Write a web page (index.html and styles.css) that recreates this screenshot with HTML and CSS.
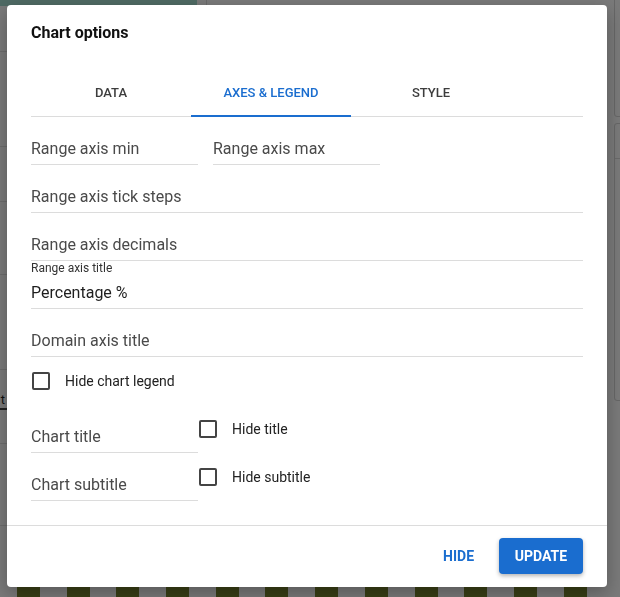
FILE: index.html
```html
<!DOCTYPE html>
<html lang="en">
<head>
<meta charset="utf-8">
<title>Chart options</title>
<link rel="stylesheet" href="styles.css">
</head>
<body>
<div class="page">
  <div class="bg-top-green"></div>
  <div class="bg-top-sep"></div>
  <div class="bg-left-lines">
    <span class="bg-line l1"></span><span class="bg-line l2"></span><span class="bg-line l3"></span>
    <span class="bg-line l4"></span><span class="bg-line l5"></span><span class="bg-line l6"></span>
    <span class="bg-line l7"></span>
  </div>
  <div class="bg-t">t</div>
  <div class="bg-card c1"></div>
  <div class="bg-card c2"></div>
  <div class="bg-bars">
    <span></span><span></span><span></span><span></span><span></span><span></span>
    <span></span><span></span><span></span><span></span><span></span><span></span>
  </div>
</div>

<div class="overlay">
  <div class="dialog">
    <h2 class="dialog-title">Chart options</h2>
    <div class="tabs">
      <div class="tab">DATA</div>
      <div class="tab tab-active">AXES &amp; LEGEND</div>
      <div class="tab">STYLE</div>
    </div>
    <div class="dialog-body">
      <div class="row-split">
        <div class="field field-half"><span class="placeholder">Range axis min</span></div>
        <div class="field field-half"><span class="placeholder">Range axis max</span></div>
      </div>
      <div class="field"><span class="placeholder">Range axis tick steps</span></div>
      <div class="field"><span class="placeholder">Range axis decimals</span></div>
      <div class="field field-labeled">
        <span class="field-label">Range axis title</span>
        <span class="value">Percentage %</span>
      </div>
      <div class="field"><span class="placeholder">Domain axis title</span></div>
      <div class="check-row">
        <label class="check"><span class="check-box"></span><span class="check-label">Hide chart legend</span></label>
      </div>
      <div class="row-pair">
        <div class="field field-half"><span class="placeholder">Chart title</span></div>
        <div class="pair-check">
          <label class="check"><span class="check-box"></span><span class="check-label">Hide title</span></label>
        </div>
      </div>
      <div class="row-pair">
        <div class="field field-half"><span class="placeholder">Chart subtitle</span></div>
        <div class="pair-check">
          <label class="check"><span class="check-box"></span><span class="check-label">Hide subtitle</span></label>
        </div>
      </div>
    </div>
    <div class="dialog-footer">
      <button class="btn btn-text">HIDE</button>
      <button class="btn btn-primary">UPDATE</button>
    </div>
  </div>
</div>
</body>
</html>
```

FILE: styles.css
```css
* { box-sizing: border-box; }
html, body { margin: 0; padding: 0; }
body {
  width: 620px;
  height: 597px;
  overflow: hidden;
  background: #7a7a7a;
  font-family: Roboto, "Liberation Sans", Arial, sans-serif;
}

/* ---- dimmed page behind the dialog ---- */
.page { position: relative; width: 620px; height: 597px; }
.bg-top-green { position: absolute; left: 0; top: 0; width: 197px; height: 6px; background: #4f6a64; }
.bg-top-sep { position: absolute; left: 206px; top: 0; width: 1px; height: 6px; background: #6a6a6a; }
.bg-line { position: absolute; left: 0; width: 8px; height: 1px; background: #6c6c6c; }
.l1 { top: 51px; } .l2 { top: 146px; } .l3 { top: 201px; } .l4 { top: 274px; }
.l5 { top: 369px; } .l6 { top: 443px; } .l7 { top: 525px; }
.bg-t { position: absolute; left: -3px; top: 392px; font-size: 13px; color: #111; line-height: 16px; border-bottom: 2px solid #222; width: 10px; text-align: right; padding-right: 2px; }
.bg-card { position: absolute; left: 614px; width: 20px; border: 1px solid #676767; border-radius: 3px; }
.c1 { top: -10px; height: 127px; }
.c2 { top: 123px; height: 278px; }
.c2::after { content: ""; position: absolute; left: 0; right: 0; top: 34px; height: 1px; background: #6a6a6a; }
.bg-bars { position: absolute; left: 17px; top: 585px; display: flex; gap: 26.7px; }
.bg-bars span { width: 23px; height: 14px; background: #393f16; }

/* ---- dialog ---- */
.overlay {
  position: fixed;
  inset: 0;
  padding: 5px 13px 10px 7px;
}
.dialog {
  width: 600px;
  height: 582px;
  background: #fff;
  border-radius: 4px;
  box-shadow: 0 6px 18px rgba(0, 0, 0, 0.28);
  display: flex;
  flex-direction: column;
}
.dialog-title {
  margin: 0;
  padding: 18px 24px 0;
  font-size: 16px;
  line-height: 20px;
  font-weight: 700;
  color: #111;
}
.tabs {
  margin: 26px 24px 0;
  display: flex;
  border-bottom: 1px solid #dcdcdc;
}
.tab {
  position: relative;
  width: 160px;
  height: 47px;
  padding-top: 1px;
  line-height: 46px;
  text-align: center;
  font-size: 13px;
  font-weight: 500;
  color: #3d3d3d;
}
.tab-active { color: #1a6dcf; }
.tab-active::after {
  content: "";
  position: absolute;
  left: 0;
  right: 0;
  bottom: -1px;
  height: 2px;
  background: #1a6dcf;
}

.dialog-body {
  flex: 1;
  padding: 0 24px;
  display: flex;
  flex-direction: column;
}
.row-split { display: flex; gap: 15px; }
.row-pair { display: flex; }
.field {
  height: 48px;
  border-bottom: 1px solid #dcdcdc;
  display: flex;
  flex-direction: column;
  justify-content: flex-end;
  padding-bottom: 5px;
  font-size: 16px;
  line-height: 21px;
}
.field-half { width: 167px; flex: none; }
.placeholder { color: #4a4a4a; }
.value { color: #1e1e1e; }
.field-labeled { justify-content: space-between; padding-top: 0; }
.field-label { font-size: 12px; line-height: 14px; color: #333; }

.check-row { height: 48px; display: flex; align-items: center; }
.check { display: flex; align-items: center; }
.check-box {
  width: 18px;
  height: 18px;
  margin-left: 1px;
  border: 2px solid #444;
  border-radius: 2px;
}
.check-label { margin-left: 15px; font-size: 14px; color: #222; line-height: 18px; }
.pair-check { padding: 15px 0 0 0; }

.dialog-footer {
  border-top: 1px solid #dcdcdc;
  padding: 12px 24px 13px;
  display: flex;
  justify-content: flex-end;
  align-items: center;
}
.btn {
  font-family: Roboto, "Liberation Sans", Arial, sans-serif;
  font-size: 14px;
  font-weight: 700;
  height: 36px;
  border: none;
  border-radius: 4px;
  background: none;
  cursor: pointer;
}
.btn-text { color: #1a6dcf; padding: 0 8px; margin-right: 17px; }
.btn-primary {
  width: 84px;
  padding: 0;
  color: #fff;
  background: #1a6dcf;
  box-shadow: 0 2px 4px rgba(0, 0, 0, 0.3);
}
```
